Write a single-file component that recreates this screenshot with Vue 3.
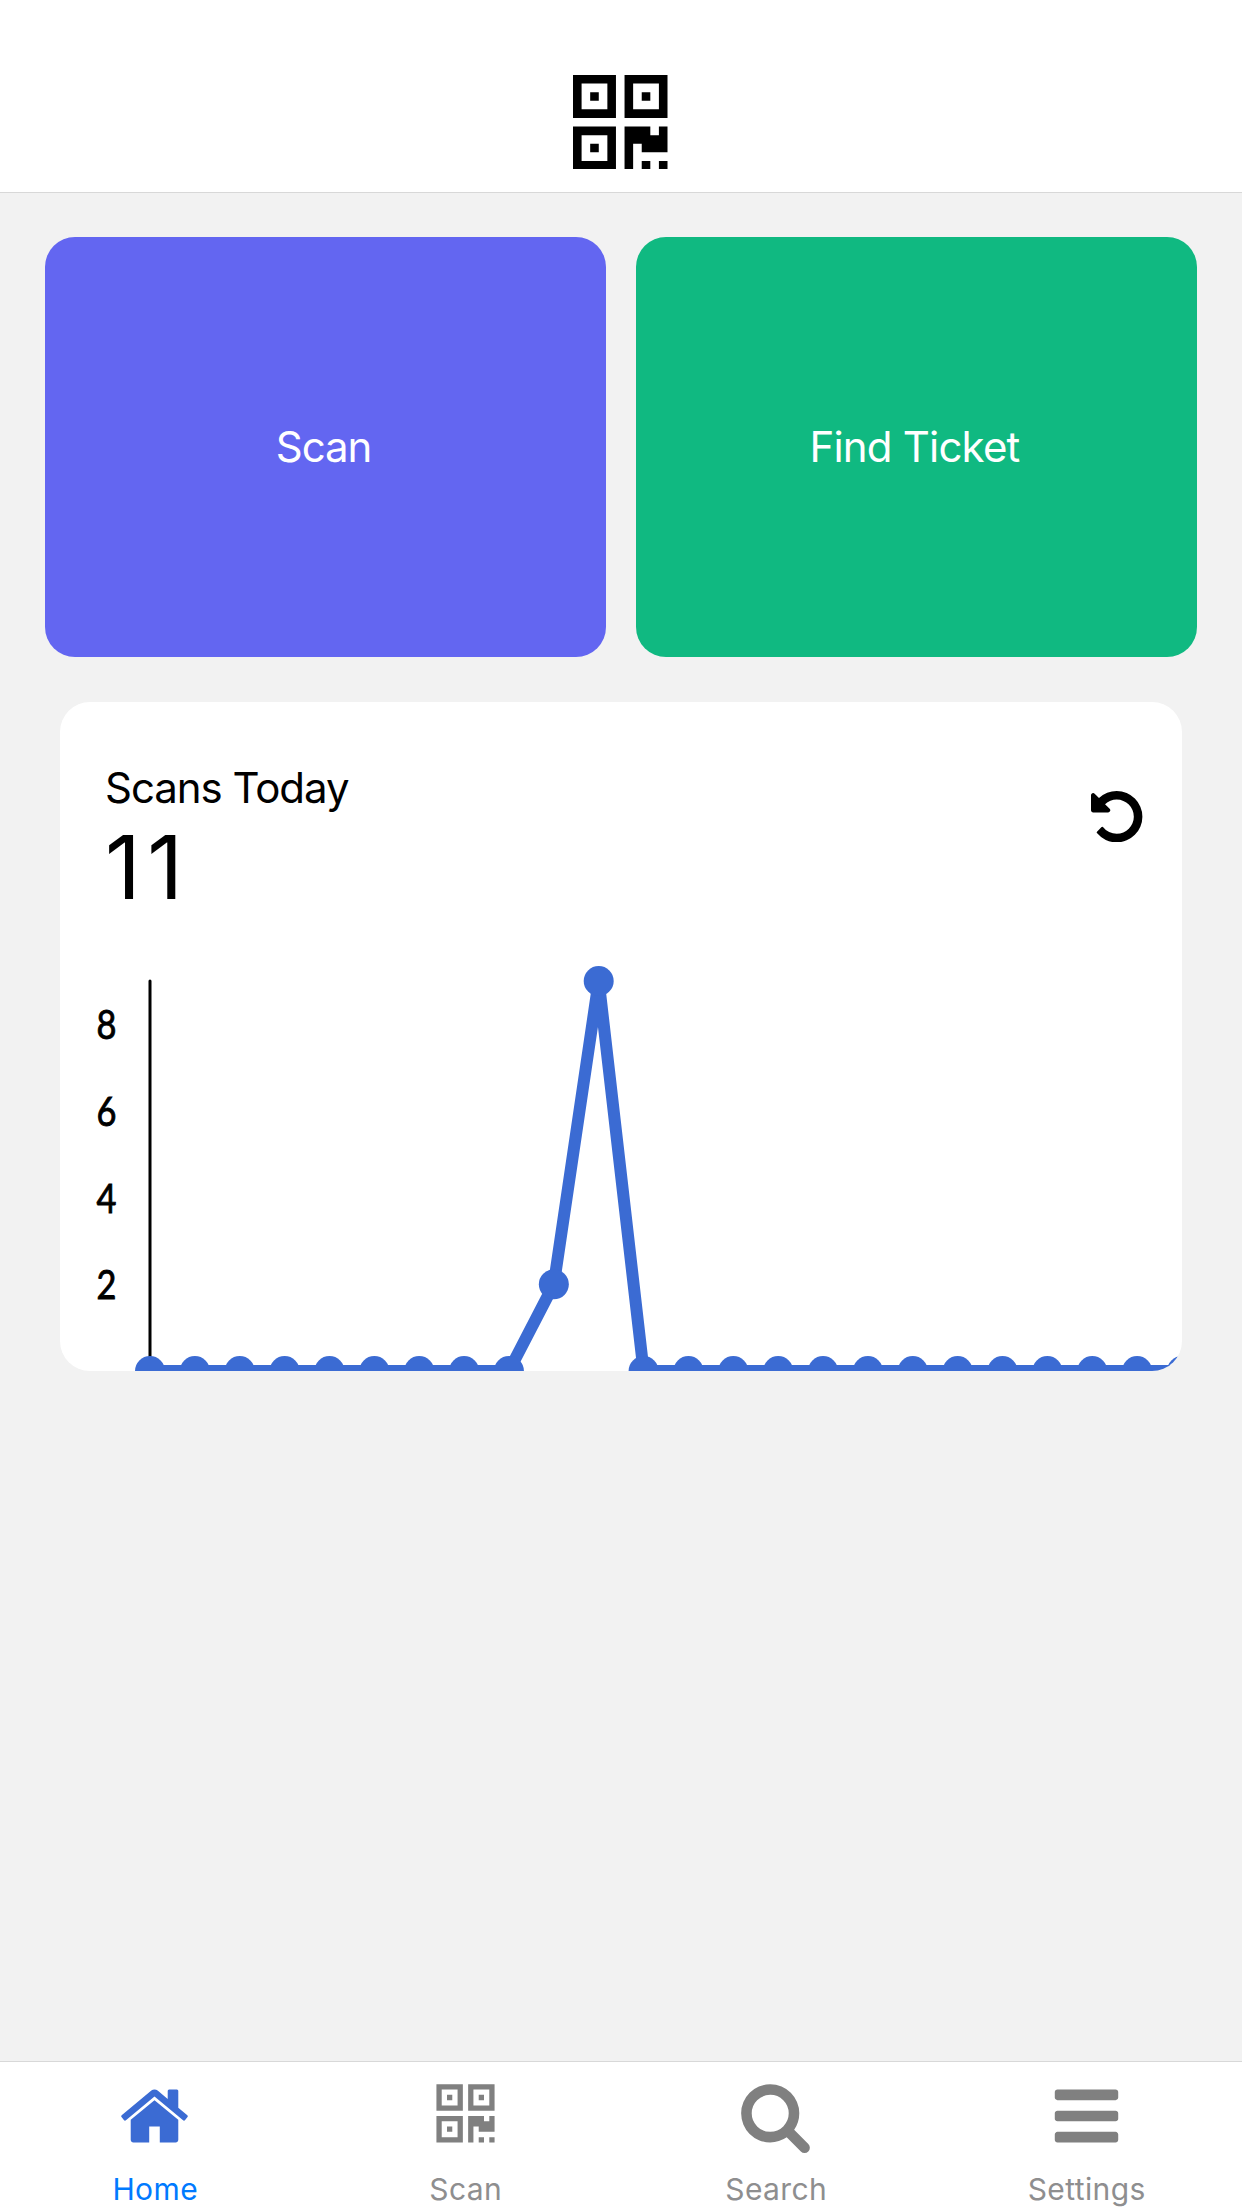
<script setup>
const hourly = [0, 0, 0, 0, 0, 0, 0, 0, 0, 2, 9, 0, 0, 0, 0, 0, 0, 0, 0, 0, 0, 0, 0, 0]
const total = hourly.reduce((sum, n) => sum + n, 0)

const chart = { left: 90, top: 29, width: 1032, height: 390 }
const max = Math.max(...hourly)
const yOf = (v) => chart.top + chart.height - (v / max) * chart.height
const points = hourly.map((v, i) => ({
  x: chart.left + (i * chart.width) / (hourly.length - 1),
  y: yOf(v),
}))
const line = points.map((p) => `${p.x},${p.y}`).join(' ')
const ticks = [8, 6, 4, 2]

const qrPath =
  'M0 0h5v5h-5zM1 1v3h3v-3zM2 2h1v1h-1zM6 0h5v5h-5zM7 1v3h3v-3zM8 2h1v1h-1zM0 6h5v5h-5zM1 7v3h3v-3zM2 8h1v1h-1zM6 6h3v1h1v-1h1v3h-3v-1h-1v3h-1zM8 10h1v1h-1zM10 10h1v1h-1z'

const tabs = [
  {
    label: 'Home',
    active: true,
    path: 'M1472 992v480q0 26-19 45t-45 19h-384v-384h-256v384h-384q-26 0-45-19t-19-45v-480q0-1 .5-3t.5-3l575-474 575 474q1 2 1 6zm223-69l-62 74q-8 9-21 11h-3q-13 0-21-7l-692-577-692 577q-12 8-24 7-13-2-21-11l-62-74q-8-10-7-23.5t11-21.5l719-599q32-26 76-26t76 26l244 204v-195q0-14 9-23t23-9h192q14 0 23 9t9 23v408l219 182q10 8 11 21.5t-7 23.5z',
  },
  { label: 'Scan', path: qrPath, transform: 'translate(192 128) scale(128)' },
  {
    label: 'Search',
    path: 'M1216 832q0-185-131.5-316.5t-316.5-131.5-316.5 131.5-131.5 316.5 131.5 316.5 316.5 131.5 316.5-131.5 131.5-316.5zm512 832q0 52-38 90t-90 38q-54 0-90-38l-343-342q-179 124-399 124-143 0-273.5-55.5t-225-150-150-225-55.5-273.5 55.5-273.5 150-225 225-150 273.5-55.5 273.5 55.5 225 150 150 225 55.5 273.5q0 220-124 399l343 343q37 37 37 90z',
  },
  {
    label: 'Settings',
    path: 'M1664 1344v128q0 26-19 45t-45 19h-1408q-26 0-45-19t-19-45v-128q0-26 19-45t45-19h1408q26 0 45 19t19 45zm0-512v128q0 26-19 45t-45 19h-1408q-26 0-45-19t-19-45v-128q0-26 19-45t45-19h1408q26 0 45 19t19 45zm0-512v128q0 26-19 45t-45 19h-1408q-26 0-45-19t-19-45v-128q0-26 19-45t45-19h1408q26 0 45 19t19 45z',
  },
]
</script>

<template>
  <div class="screen">
    <header class="header">
      <svg class="logo" viewBox="0 0 11 11"><path :d="qrPath" fill-rule="evenodd" /></svg>
    </header>

    <main class="content">
      <div class="actions">
        <button class="action scan"><span>Scan</span></button>
        <button class="action find"><span>Find Ticket</span></button>
      </div>

      <section class="card">
        <div class="card-head">
          <div>
            <div class="title">Scans Today</div>
            <div class="total">{{ total }}</div>
          </div>
          <svg class="undo" viewBox="128 128 1536 1536">
            <path
              d="M1664 896q0 156-61 298t-164 245-245 164-298 61q-172 0-327-72.5t-264-204.5q-7-10-6.5-22.5t8.5-20.5l137-138q10-9 25-9 16 2 23 12 73 95 179 147t225 52q104 0 198.5-40.5t163.5-109.5 109.5-163.5 40.5-198.5-40.5-198.5-109.5-163.5-163.5-109.5-198.5-40.5q-98 0-188 35.5t-160 101.5l137 138q31 30 14 69-17 40-59 40h-448q-26 0-45-19t-19-45v-448q0-42 40-59 39-17 69 14l130 129q107-101 244.5-156.5t284.5-55.5q156 0 298 61t245 164 164 245 61 298z"
            />
          </svg>
        </div>
        <svg class="chart" viewBox="0 0 1122 419">
          <line class="axis" x1="90" y1="29" x2="90" y2="419" />
          <text
            v-for="t in ticks"
            :key="t"
            class="tick"
            :transform="`translate(46.5 ${yOf(t) + 15}) scale(0.86 1)`"
          >{{ t }}</text>
          <polyline class="line" :points="line" />
          <circle v-for="(p, i) in points" :key="i" class="dot" :cx="p.x" :cy="p.y" r="15" />
        </svg>
      </section>
    </main>

    <nav class="tabs">
      <a v-for="tab in tabs" :key="tab.label" class="tab" :class="{ active: tab.active }">
        <svg class="tab-icon" viewBox="0 0 1792 1792">
          <path :d="tab.path" :transform="tab.transform" fill-rule="evenodd" />
        </svg>
        <span class="tab-label">{{ tab.label }}</span>
      </a>
    </nav>
  </div>
</template>

<style>
body {
  margin: 0;
}
</style>

<style scoped>
.screen {
  display: flex;
  flex-direction: column;
  width: 1242px;
  height: 2208px;
  overflow: hidden;
  background: #f2f2f2;
  font-family: Inter, "Liberation Sans", sans-serif;
  color: #000;
}
.header {
  box-sizing: border-box;
  display: flex;
  justify-content: center;
  height: 193px;
  padding-top: 74.6px;
  background: #fff;
  border-bottom: 1px solid #d8d8d8;
}
.logo {
  width: 94.5px;
  height: 94.5px;
  margin-right: 1px;
}
.content {
  flex: 1;
  padding: 44px 45px 0;
}
.actions {
  display: flex;
  gap: 30px;
}
.action {
  flex: 1;
  height: 420px;
  padding: 0 4px 2px 0;
  border: 0;
  border-radius: 30px;
  color: #fff;
  font: 400 42px Inter, "Liberation Sans", sans-serif;
  letter-spacing: -0.8px;
}
.scan {
  background: #6366f1;
  letter-spacing: -1.1px;
}
.find {
  background: #10b981;
}
.card {
  display: flex;
  flex-direction: column;
  justify-content: space-between;
  height: 669px;
  margin: 45px 15px 0;
  border-radius: 30px;
  background: #fff;
  overflow: hidden;
}
.card-head {
  display: flex;
  justify-content: space-between;
  padding: 60px 39.5px 0 45px;
}
.title {
  font-size: 42px;
  line-height: 51px;
  letter-spacing: -1.05px;
}
.total {
  margin-top: 1px;
  font-size: 88px;
  line-height: 107px;
  letter-spacing: 6.5px;
}
.undo {
  width: 51.4px;
  height: 51.4px;
  margin-top: 29px;
}
.chart {
  display: block;
  width: 1122px;
  height: 419px;
}
.axis {
  stroke: #000;
  stroke-width: 3;
  stroke-linecap: round;
}
.tick {
  font: 400 40px Lato, sans-serif;
  text-anchor: middle;
  stroke: #000;
  stroke-width: 0.9;
}
.line {
  fill: none;
  stroke: #3b6bd3;
  stroke-width: 12;
}
.dot {
  fill: #3b6bd3;
}
.tabs {
  box-sizing: border-box;
  display: flex;
  height: 147px;
  padding-top: 17px;
  background: #fff;
  border-top: 1px solid #d8d8d8;
}
.tab {
  flex: 1;
  display: flex;
  flex-direction: column;
  align-items: center;
  color: #8e8e8f;
}
.tab-icon {
  width: 75px;
  height: 75px;
  margin-right: 1px;
  fill: #808080;
}
.tab-label {
  margin-top: 17px;
  font-size: 30px;
  line-height: 38px;
  letter-spacing: 0.4px;
}
.active {
  color: #007aff;
}
.active .tab-icon {
  fill: #3b6bd3;
}
</style>
